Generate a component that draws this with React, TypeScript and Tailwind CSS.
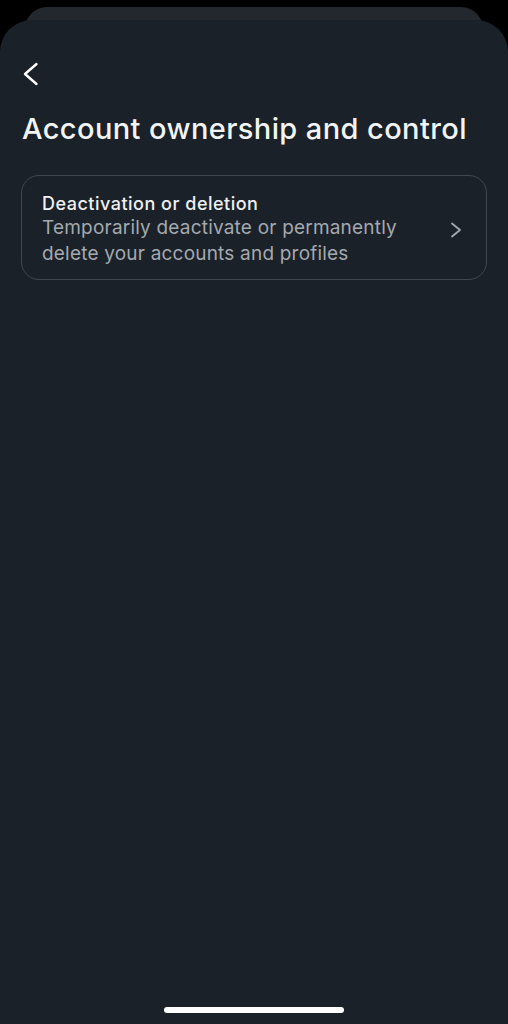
const App = () => {
  return (
    <div
      className="min-h-screen bg-black pt-[7px]"
      style={{ fontFamily: "Inter, Roboto, sans-serif" }}
    >
      <div className="mx-[25px] h-[40px] rounded-t-[22px] bg-[#22282e]" />
      <div className="-mt-[27px] flex h-[1004px] flex-col rounded-t-[32px] bg-[#1b2128]">
        <div className="px-[22px] pt-[42px]">
          <button className="flex h-[24px] w-[18px] items-center justify-center text-white">
            <svg width="18" height="24" viewBox="0 0 18 24" fill="none">
              <polyline
                points="14.5,2 3,12 14.5,22"
                stroke="currentColor"
                strokeWidth="2.4"
                strokeLinecap="round"
                strokeLinejoin="round"
              />
            </svg>
          </button>
        </div>
        <h1 className="mt-[25px] px-[22px] text-[29px] font-medium leading-[36px] tracking-[0.4px] text-[#f2f4f5]">
          Account ownership and control
        </h1>
        <div className="mx-[21px] mt-[28px] flex items-center rounded-[18px] border border-[#41474e] pb-[12px] pl-[20px] pr-[24px] pt-[16px]">
          <div className="flex-1">
            <div className="text-[18px] font-medium leading-[23px] tracking-[0.5px] text-[#eef0f2]">
              Deactivation or deletion
            </div>
            <div className="text-[19px] leading-[26px] tracking-[0.2px] text-[#a3a9b0]">
              Temporarily deactivate or permanently
              <br />
              delete your accounts and profiles
            </div>
          </div>
          <svg width="12" height="16" viewBox="0 0 12 16" fill="none" className="text-[#a3a9b0]">
            <polyline
              points="2,1.5 10,8 2,14.5"
              stroke="currentColor"
              strokeWidth="1.8"
              strokeLinecap="round"
              strokeLinejoin="round"
            />
          </svg>
        </div>
        <div className="flex-1" />
        <div className="flex justify-center pb-[11px]">
          <div className="h-[6px] w-[180px] rounded-full bg-white" />
        </div>
      </div>
    </div>
  );
};

export default App;
